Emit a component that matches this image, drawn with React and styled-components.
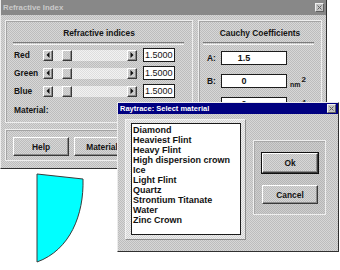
import React from 'react';
import styled, { createGlobalStyle, css } from 'styled-components';

const dither = (a, b) => css`
  background: repeating-conic-gradient(${a} 0 25%, ${b} 0 50%) 0 0 / 2px 2px;
`;

const GlobalStyle = createGlobalStyle`
  html, body { margin: 0; background: #fff; }
  body {
    font-family: "Liberation Sans", Arial, sans-serif;
    color: #141414;
  }
`;

const Desktop = styled.div`
  position: relative;
  width: 340px;
  height: 270px;
  overflow: hidden;
`;

const Window = styled.div`
  position: absolute;
  left: ${p => p.$x}px;
  top: ${p => p.$y}px;
  width: ${p => p.$w}px;
  height: ${p => p.$h}px;
  box-sizing: border-box;
  display: flex;
  flex-direction: column;
  border: 1px solid;
  border-color: #ececec #303030 #303030 #ececec;
  ${dither('#bdbdbd', '#d7d7d7')}
`;

const TitleBar = styled.div`
  height: ${p => p.$h}px;
  flex: none;
  display: flex;
  align-items: center;
  justify-content: space-between;
  padding: 0 2px 0 2px;
  background: ${p => (p.$active ? '#000080' : '#888888')};
  color: ${p => (p.$active ? '#ffffff' : '#cacaca')};
  font-weight: 700;
  font-size: ${p => p.$size}px;
  white-space: nowrap;
`;

const CloseBox = styled.span`
  width: 9px;
  height: 9px;
  box-sizing: border-box;
  border: 1px solid;
  border-color: #f0f0f0 #606060 #606060 #f0f0f0;
  background: #c4c4c4;
  display: flex;
  align-items: center;
  justify-content: center;
`;

const MainBody = styled.div`
  flex: 1;
  display: grid;
  grid-template-columns: 188px 124px;
  grid-template-rows: 103px 32px;
  column-gap: 5px;
  row-gap: 6px;
  padding: 5px 3px 0 4px;
`;

const Group = styled.div`
  box-sizing: border-box;
  border: 1px solid #eeeeee;
  box-shadow: inset 1px 1px #a4a4a4;
  grid-column: ${p => p.$col};
  grid-row: ${p => p.$row};
  display: flex;
  flex-direction: column;
`;

const GroupTitle = styled.div`
  height: 21px;
  padding-top: 6px;
  box-sizing: border-box;
  line-height: 12px;
  font-size: 8.4px;
  font-weight: 700;
  text-align: center;
`;

const Separator = styled.div`
  height: 1px;
  border-top: 1px solid #7c7c7c;
  border-bottom: 1px solid #f4f4f4;
  margin: ${p => p.$margin};
`;

const Rows = styled.div`
  display: flex;
  flex-direction: column;
  gap: ${p => p.$gap}px;
  padding: ${p => p.$pad};
`;

const Row = styled.div`
  display: flex;
  align-items: center;
  height: 14px;
  margin-top: ${p => p.$mt || 0}px;
`;

const Label = styled.span`
  width: ${p => p.$w}px;
  flex: none;
  font-size: 8.4px;
  font-weight: 700;
`;

const ScrollBar = styled.div`
  width: 94px;
  height: 11px;
  display: flex;
  margin-right: 6px;
`;

const raised = css`
  box-sizing: border-box;
  border: 1px solid;
  border-color: #ffffff #3a3a3a #3a3a3a #ffffff;
  box-shadow: inset -1px -1px #8a8a8a;
`;

const ArrowBtn = styled.span`
  ${raised}
  width: 10px;
  height: 11px;
  flex: none;
  ${dither('#c2c2c2', '#d6d6d6')}
  display: flex;
  align-items: center;
  justify-content: center;
`;

const Track = styled.div`
  flex: 1;
  display: flex;
  ${dither('#dedede', '#f2f2f2')}
`;

const Thumb = styled.span`
  ${raised}
  width: 10px;
  height: 11px;
  margin-left: ${p => p.$pos}px;
  ${dither('#c2c2c2', '#d6d6d6')}
`;

const Field = styled.div`
  box-sizing: border-box;
  width: ${p => p.$w}px;
  height: 14px;
  background: #fff;
  border: 1px solid #1c1c1c;
  font-size: 9px;
  line-height: 12px;
  padding: 0 ${p => p.$pr || 0}px 0 ${p => p.$pl || 0}px;
  text-align: ${p => p.$align || 'left'};
  font-weight: ${p => (p.$bold ? 700 : 400)};
`;

const Unit = styled.span`
  margin-left: 3px;
  font-size: 7px;
  font-weight: 700;
  align-self: flex-end;
  sup {
    font-size: 8px;
    vertical-align: 5px;
    margin-left: 1px;
  }
`;

const ButtonBar = styled.div`
  display: flex;
  gap: 5px;
  padding: 7px 0 0 7px;
`;

const Button = styled.button`
  ${raised}
  ${dither('#bdbdbd', '#d7d7d7')}
  width: 56px;
  height: ${p => p.$h || 19}px;
  padding: 0;
  font-family: inherit;
  font-size: 8.4px;
  font-weight: 700;
  color: #141414;
  flex: none;
  ${p => p.$default && css`
    outline: 1px solid #101010;
    outline-offset: 0;
  `}
`;

const DialogBody = styled.div`
  flex: 1;
  display: flex;
  align-items: flex-start;
  gap: 7px;
  padding: 5px 0 0 7px;
`;

const ListFrame = styled.div`
  box-sizing: border-box;
  width: 121px;
  height: 121px;
  padding: 3px 4px 4px 5px;
  border: 1px solid;
  border-color: #f2f2f2 #8c8c8c #8c8c8c #f2f2f2;
  ${dither('#d2d2d2', '#eeeeee')}
`;

const ListBox = styled.ul`
  box-sizing: border-box;
  height: 100%;
  margin: 0;
  padding: 1px 0 0 1px;
  list-style: none;
  background: #fff;
  border: 1px solid #1a1a1a;
`;

const ListItem = styled.li`
  font-size: 9px;
  line-height: 10px;
  font-weight: 700;
  white-space: nowrap;
  color: #111;
`;

const ButtonFrame = styled.div`
  box-sizing: border-box;
  width: 73px;
  height: 75px;
  margin-top: 21px;
  display: flex;
  flex-direction: column;
  gap: 12px;
  padding: 12px 0 0 8px;
  border: 1px solid #efefef;
  box-shadow: inset 1px 1px #a8a8a8;
  ${dither('#b6b6b6', '#cecece')}
`;

const Shape = styled.svg`
  position: absolute;
  left: 30px;
  top: 170px;
`;

const CloseGlyph = () => (
  <svg width="5" height="5" viewBox="0 0 5 5">
    <path d="M0.5 0.5 L4.5 4.5 M4.5 0.5 L0.5 4.5" stroke="#606060" strokeWidth="1" />
  </svg>
);

const Arrow = ({ dir }) => (
  <svg width="4" height="6" viewBox="0 0 4 6">
    <path d={dir === 'left' ? 'M3.5 0 L0.5 3 L3.5 6 Z' : 'M0.5 0 L3.5 3 L0.5 6 Z'} fill="#111" />
  </svg>
);

const indices = ['Red', 'Green', 'Blue'];
const materials = [
  'Diamond', 'Heaviest Flint', 'Heavy Flint', 'High dispersion crown', 'Ice',
  'Light Flint', 'Quartz', 'Strontium Titanate', 'Water', 'Zinc Crown',
];
// third row sits behind the dialog; only its field top and exponent show
const coefficients = [
  { id: 'a', name: 'A:', value: '1.5' },
  { id: 'b', name: 'B:', value: '0', unit: '2' },
  { id: 'c', name: '', value: '0', unit: '4' },
];

export default function App() {
  return (
    <Desktop>
      <GlobalStyle />
      <Window $x={0} $y={-1} $w={327} $h={170}>
        <TitleBar $h={15} $size={7.8}>
          <span>Refractive Index</span>
          <CloseBox><CloseGlyph /></CloseBox>
        </TitleBar>
        <MainBody>
          <Group $col="1" $row="1">
            <GroupTitle>Refractive indices</GroupTitle>
            <Separator $margin="0 8px 0 7px" />
            <Rows $gap={4} $pad="3px 0 0 8px">
              {indices.map(name => (
                <Row key={name}>
                  <Label $w={29}>{name}</Label>
                  <ScrollBar>
                    <ArrowBtn><Arrow dir="left" /></ArrowBtn>
                    <Track><Thumb $pos={9} /></Track>
                    <ArrowBtn><Arrow dir="right" /></ArrowBtn>
                  </ScrollBar>
                  <Field $w={32} $pl={1}>1.5000</Field>
                </Row>
              ))}
              <Row $mt={1}>
                <Label $w={60}>Material:</Label>
              </Row>
            </Rows>
          </Group>
          <Group $col="2" $row="1 / span 2">
            <GroupTitle>Cauchy Coefficients</GroupTitle>
            <Separator $margin="0 7px 0 4px" />
            <Rows $gap={9} $pad="6px 0 0 8px">
              {coefficients.map(c => (
                <Row key={c.id}>
                  <Label $w={14}>{c.name}</Label>
                  <Field $w={66} $align="center" $pr={20} $bold>{c.value}</Field>
                  {c.unit && <Unit>nm<sup>{c.unit}</sup></Unit>}
                </Row>
              ))}
            </Rows>
          </Group>
          <Group $col="1" $row="2">
            <ButtonBar>
              <Button>Help</Button>
              <Button>Material</Button>
            </ButtonBar>
          </Group>
        </MainBody>
      </Window>

      <Shape width="60" height="100" viewBox="30 170 60 100">
        <path d="M37 174 L83 179 C84 215 70 250 37 262 Z" fill="#00ffff" stroke="#3a3a3a" strokeWidth="1" />
      </Shape>

      <Window $x={117} $y={102} $w={222} $h={150}>
        <TitleBar $h={11} $size={7.5} $active>
          <span>Raytrace: Select material</span>
          <CloseBox><CloseGlyph /></CloseBox>
        </TitleBar>
        <DialogBody>
          <ListFrame>
            <ListBox>
              {materials.map(m => <ListItem key={m}>{m}</ListItem>)}
            </ListBox>
          </ListFrame>
          <ButtonFrame>
            <Button $default $h={20}>Ok</Button>
            <Button>Cancel</Button>
          </ButtonFrame>
        </DialogBody>
      </Window>
    </Desktop>
  );
}
